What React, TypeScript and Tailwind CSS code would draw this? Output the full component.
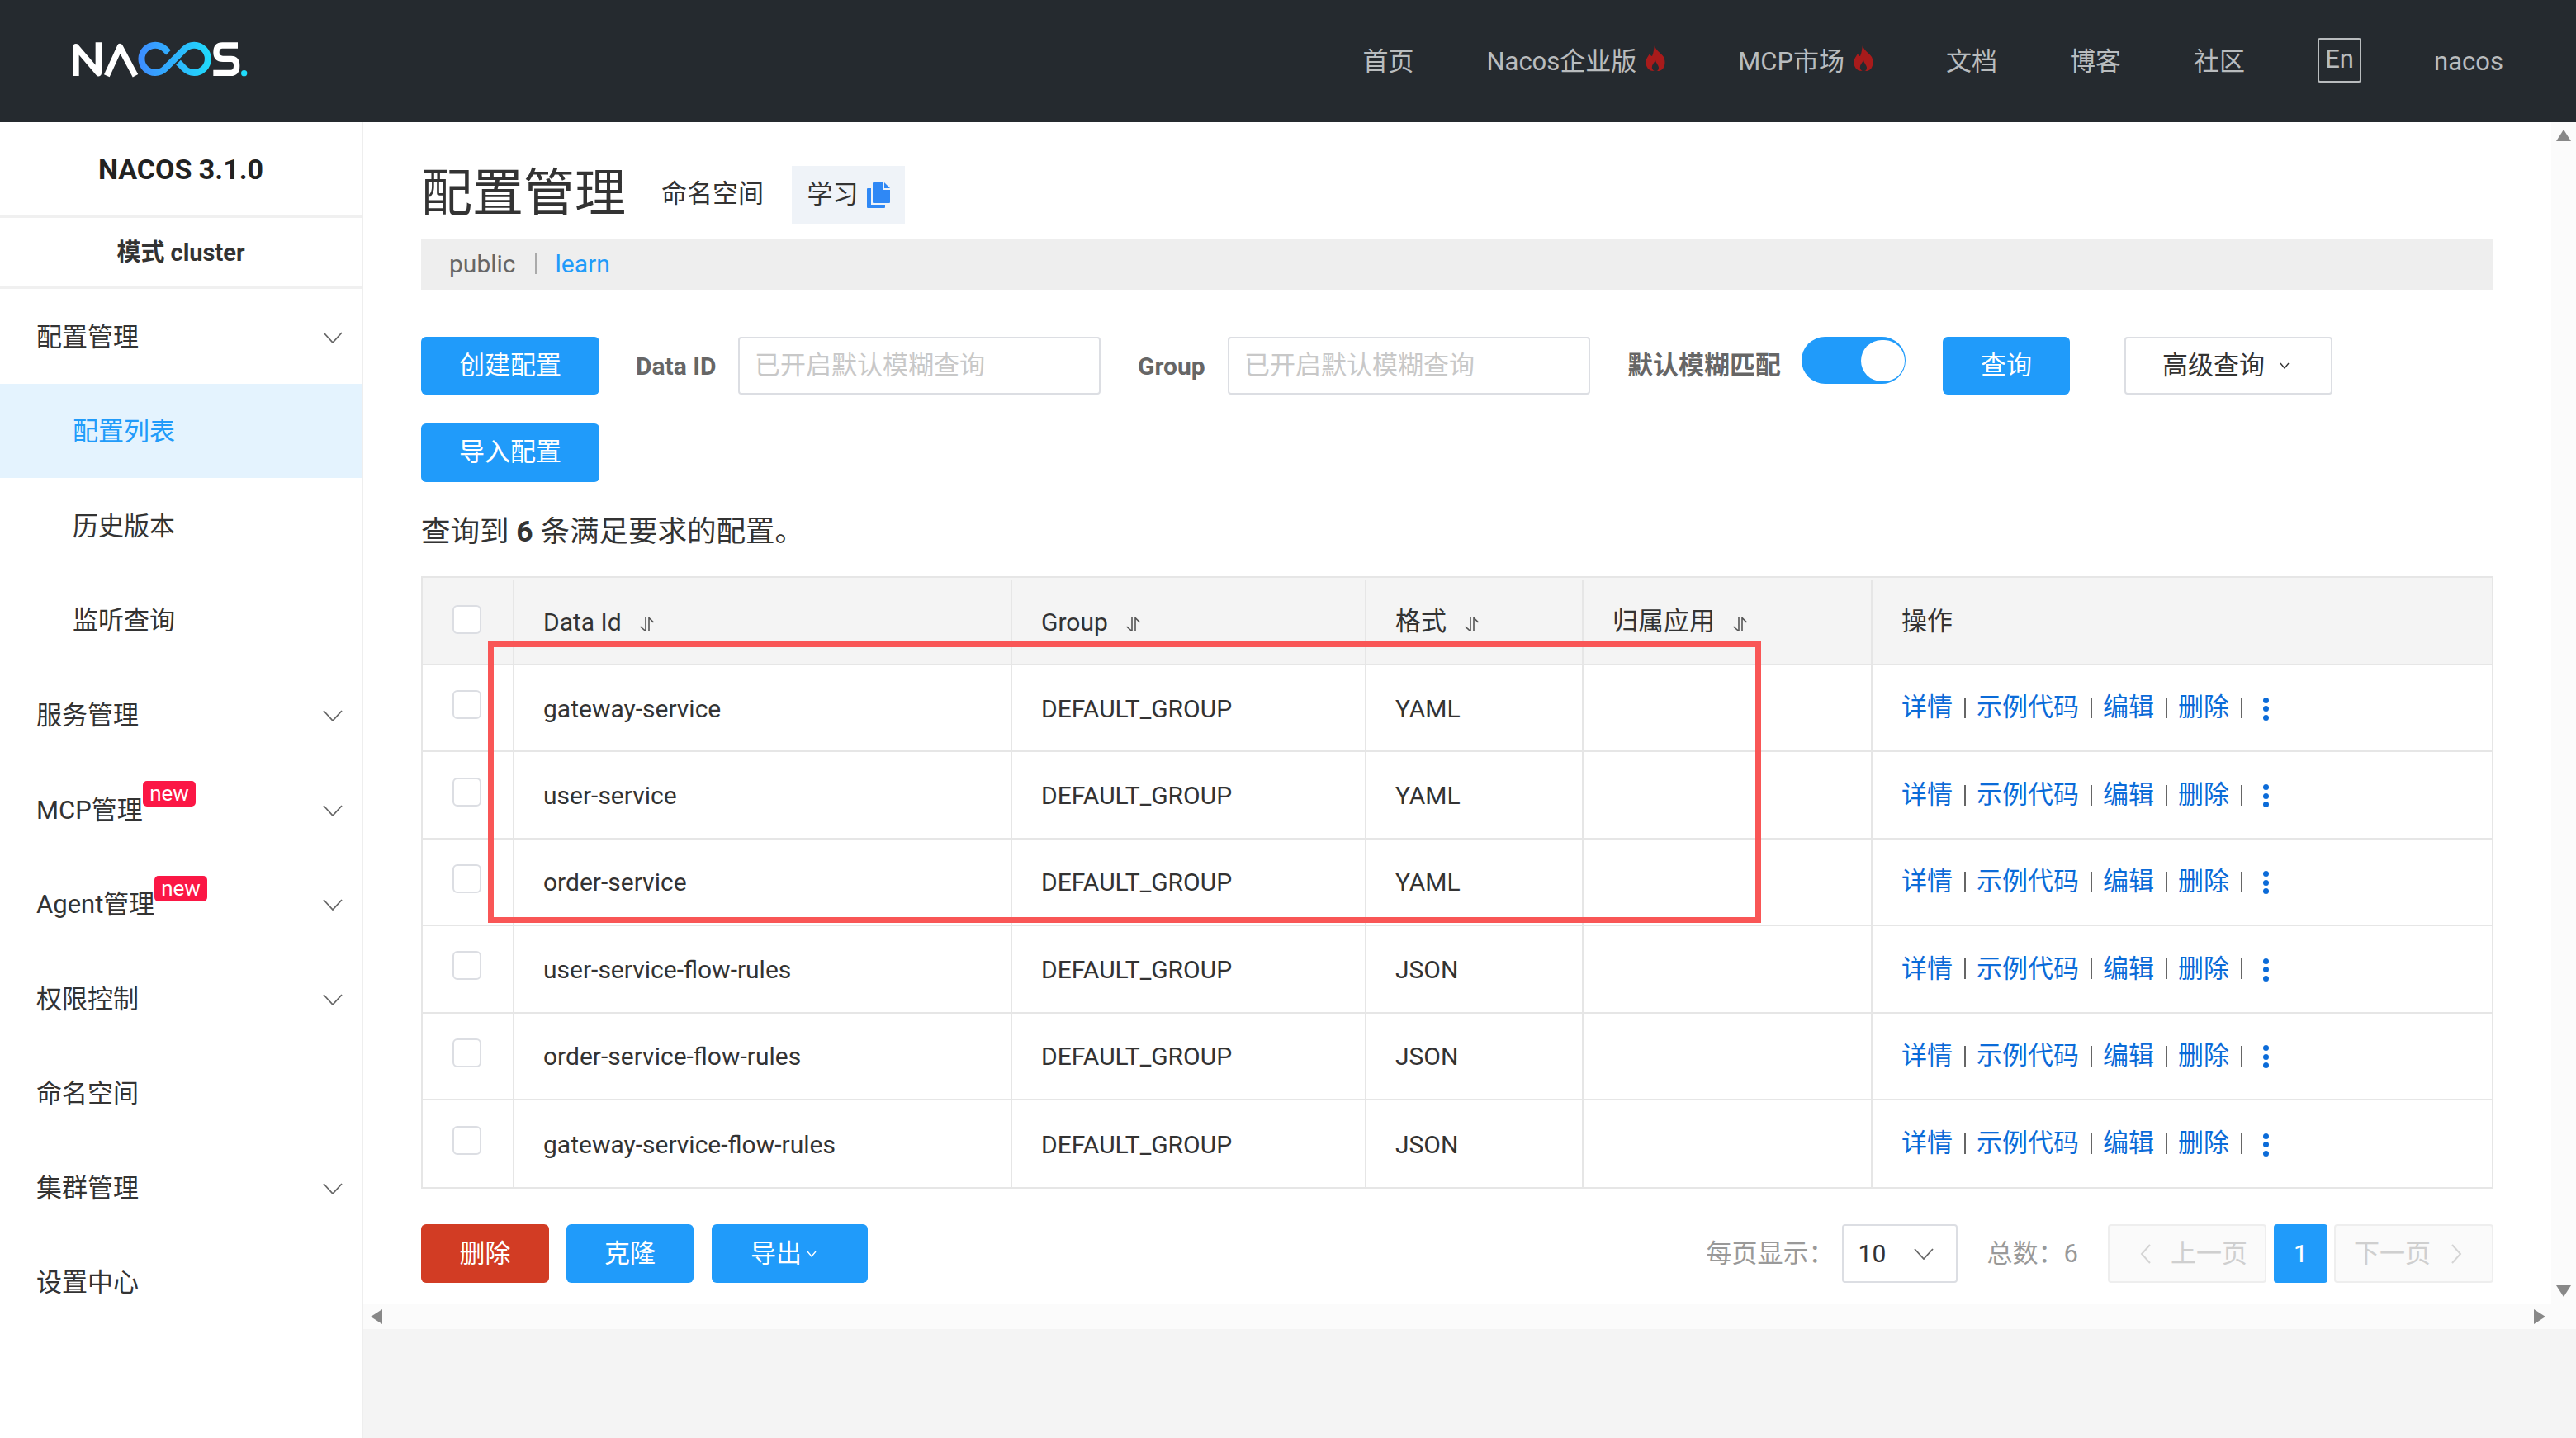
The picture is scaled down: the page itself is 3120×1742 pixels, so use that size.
const font = 'font-["Roboto","Noto_Sans_CJK_SC",sans-serif]'

const navLinks = [
  { label: '首页' },
  { label: 'Nacos企业版', hot: true },
  { label: 'MCP市场', hot: true },
  { label: '文档' },
  { label: '博客' },
  { label: '社区' },
]

const menu = [
  { label: '配置管理', arrow: true },
  { label: '配置列表', sub: true, active: true },
  { label: '历史版本', sub: true },
  { label: '监听查询', sub: true },
  { label: '服务管理', arrow: true },
  { label: 'MCP管理', arrow: true, badge: 'left-[173px]' },
  { label: 'Agent管理', arrow: true, badge: 'left-[187px]' },
  { label: '权限控制', arrow: true },
  { label: '命名空间' },
  { label: '集群管理', arrow: true },
  { label: '设置中心' },
]

const rows = [
  { id: 'gateway-service', format: 'YAML' },
  { id: 'user-service', format: 'YAML' },
  { id: 'order-service', format: 'YAML' },
  { id: 'user-service-flow-rules', format: 'JSON' },
  { id: 'order-service-flow-rules', format: 'JSON' },
  { id: 'gateway-service-flow-rules', format: 'JSON' },
]

function Logo() {
  return (
    <svg width="260" height="100" viewBox="0 0 780 300" fill="none">
      <defs>
        <linearGradient id="logo-loop" x1="320" y1="0" x2="590" y2="0" gradientUnits="userSpaceOnUse">
          <stop offset="0" stopColor="#3e8bff" />
          <stop offset="1" stopColor="#1fdcfb" />
        </linearGradient>
      </defs>
      <path d="M96 210V104L178 200V88" stroke="#fff" strokeWidth="22" strokeLinejoin="round" />
      <path d="M208 209L256 104L312 209" stroke="#fff" strokeWidth="22" strokeLinejoin="round" />
      <path
        d="M432 125L420 113A50 50 0 1 0 420 183L490 113A50 50 0 1 1 490 183L468 161"
        stroke="url(#logo-loop)"
        strokeWidth="24"
      />
      <path
        d="M684 99H628Q606 99 606 124Q606 148 630 148H660Q680 148 680 173Q680 199 658 199H595"
        stroke="#fff"
        strokeWidth="22"
      />
      <circle cx="707" cy="200" r="11" fill="#1fdcfb" />
    </svg>
  )
}

function Flame() {
  return (
    <svg width="24" height="31" viewBox="0 0 24 31" className="-mt-[9px] shrink-0">
      <path
        fillRule="evenodd"
        fill="#a81b1b"
        d="M11 0C12 6 19 9 22 14C25 20 24 31 14 31H10C2 31 -1 22 1 17C2 14 4 12 5 10C6 12 7 13 8 13C10 9 10 4 11 0ZM12 18C10 22 7 24 8 28C9 30 10 31 11 31H13C15 31 16 29 16 27C16 24 13 22 12 18Z"
      />
    </svg>
  )
}

function Chevron({ className = '' }: { className?: string }) {
  return (
    <svg width="24" height="14" viewBox="0 0 24 14" fill="none" stroke="#666" strokeWidth="1.8" className={`shrink-0 ${className}`}>
      <path d="M1 1L12 13L23 1" />
    </svg>
  )
}

function TinyChevron({ size = 12 }: { size?: number }) {
  return (
    <svg width={size} height="8" viewBox="0 0 12 8" fill="none" stroke="currentColor" strokeWidth="1.4" className="shrink-0">
      <path d="M1 1L6 7L11 1" />
    </svg>
  )
}

function PageArrow({ d }: { d: string }) {
  return (
    <svg width="13" height="24" viewBox="0 0 13 24" fill="none" stroke="#d4d4d4" strokeWidth="2" className="shrink-0">
      <path d={d} />
    </svg>
  )
}

function SortIcon() {
  return (
    <svg width="17" height="18" viewBox="0 0 17 18" fill="none" stroke="#555" strokeWidth="1.6" className="ml-[22px] mt-[5px] shrink-0">
      <path d="M0.5 12L7 17.5V0" />
      <path d="M11 18V1.5L16.5 7" />
    </svg>
  )
}

function Checkbox({ className = '' }: { className?: string }) {
  return <span className={`block size-[35px] rounded-md border-2 border-[#dcdee3] bg-white ${className}`} />
}

function Btn({ children, className = '' }: { children: React.ReactNode; className?: string }) {
  return (
    <button className={`flex h-[70px] items-center justify-center rounded-md bg-[#209bfa] text-[31px] text-white ${className}`}>
      {children}
    </button>
  )
}

function Cell({ className, children }: { className: string; children?: React.ReactNode }) {
  return (
    <div className={`flex h-full shrink-0 items-center border-r-2 border-[#e6e6e6] px-[35px] ${className}`}>
      {children}
    </div>
  )
}

function Actions() {
  const sep = <span className="mx-[13.5px] inline-block h-[25px] w-[2px] bg-[#666]" />
  return (
    <div className="flex items-center text-[31px] text-[#0b6bd8]">
      <span>详情</span>
      {sep}
      <span>示例代码</span>
      {sep}
      <span>编辑</span>
      {sep}
      <span>删除</span>
      {sep}
      <span className="ml-[12px] flex flex-col gap-[3.5px] pt-[2px]">
        <i className="block size-[7px] rounded-full bg-[#0b6bd8]" />
        <i className="block size-[7px] rounded-full bg-[#0b6bd8]" />
        <i className="block size-[7px] rounded-full bg-[#0b6bd8]" />
      </span>
    </div>
  )
}

export default function App() {
  return (
    <div className={`flex h-[1742px] w-[3120px] flex-col overflow-hidden bg-white ${font} text-[#333]`}>
      {/* top bar */}
      <header className="flex h-[148px] shrink-0 items-center justify-between bg-[#252a2f] pl-[60px] pr-[88px]">
        <div className="mt-[-4px]">
          <Logo />
        </div>
        <nav className="flex items-center gap-[88px] pt-[2px] text-[31px] text-[#b9bcbe]">
          {navLinks.map((l) => (
            <span key={l.label} className="flex items-center gap-[11px]">
              {l.label}
              {l.hot && <Flame />}
            </span>
          ))}
          <span className="-mt-[5px] flex h-[54px] w-[53px] items-center justify-center rounded-[3px] border-2 border-[#b9bcbe] text-[31px]">
            En
          </span>
          <span>nacos</span>
        </nav>
      </header>

      <div className="flex min-h-0 flex-1">
        {/* sidebar */}
        <aside className="w-[440px] shrink-0 border-r-2 border-[#eeeeee] bg-white">
          <div className="flex h-[116px] items-center justify-center border-b-[3px] border-[#f0f0f0] pt-[2px] text-[34px] font-bold text-[#222]">
            NACOS 3.1.0
          </div>
          <div className="flex h-[86px] items-center justify-center border-b-[3px] border-[#f0f0f0] pt-[3px] text-[29px] font-bold text-[#333]">
            模式&nbsp;cluster
          </div>
          <ul className="text-[31px]">
            {menu.map((m) => (
              <li
                key={m.label}
                className={`relative flex h-[114.6px] items-center justify-between pr-[23px] pt-[3px] ${
                  m.sub ? 'pl-[88px]' : 'pl-[44px]'
                } ${m.active ? 'bg-[#e4f3fe] text-[#209bfa]' : ''}`}
              >
                {m.label}
                {m.arrow && <Chevron />}
                {m.badge && (
                  <span
                    className={`absolute top-[23px] flex h-[31px] w-[64px] items-center justify-center rounded-[5px] bg-[#fb1745] text-[26px] text-white ${m.badge}`}
                  >
                    new
                  </span>
                )}
              </li>
            ))}
          </ul>
        </aside>

        {/* main area */}
        <main className="flex min-w-0 flex-1 flex-col bg-[#f4f4f4]">
          <div className="flex h-[1432px] shrink-0 bg-white">
            <div className="relative w-[2650px] shrink-0 pl-[70px] pr-[70px]">
              <div className="flex h-[141px] items-center pt-[32px]">
                <h1 className="text-[62px] font-normal text-[#333]">配置管理</h1>
                <span className="ml-[43px] mt-[2px] text-[31px]">命名空间</span>
                <span className="ml-[34px] mt-[3px] flex h-[70px] w-[137px] items-center justify-center gap-[10px] bg-[#eff3f8] text-[31px]">
                  学习
                  <svg width="28" height="31" viewBox="0 0 28 31" fill="#2f88f5" className="shrink-0">
                    <path d="M7 1Q7 0 8 0H19V9H28V24Q28 25 27 25H8Q7 25 7 24Z" />
                    <path d="M21 0L28 7H21Z" />
                    <path d="M0 8Q0 7 1 7H5V27H22V30Q22 31 21 31H1Q0 31 0 30Z" />
                  </svg>
                </span>
              </div>
              <div className="flex h-[62px] items-center bg-[#eeeeee] pb-[2px] pl-[34px] text-[30px] text-[#666]">
                public
                <span className="mx-[23px] h-[26px] w-[2px] bg-[#aaa]" />
                <span className="text-[#209bfa]">learn</span>
              </div>

              {/* filter bar */}
              <div className="mt-[57px] flex h-[70px] items-center">
                <Btn className="w-[216px]">创建配置</Btn>
                <span className="ml-[44px] w-[124px] text-[30px] font-bold text-[#666]">Data ID</span>
                <div className="flex h-[70px] w-[439px] items-center rounded-[4px] border-2 border-[#dcdee3] pl-[18px] text-[31px] text-[#c8c8c8]">
                  已开启默认模糊查询
                </div>
                <span className="ml-[45px] w-[109px] text-[30px] font-bold text-[#666]">Group</span>
                <div className="flex h-[70px] w-[439px] items-center rounded-[4px] border-2 border-[#dcdee3] pl-[18px] text-[31px] text-[#c8c8c8]">
                  已开启默认模糊查询
                </div>
                <span className="ml-[45px] w-[211px] text-[31px] font-bold text-[#666]">默认模糊匹配</span>
                <span className="-mt-[13px] flex h-[57px] w-[126px] items-center justify-end rounded-full bg-[#209bfa] pr-[1px]">
                  <i className="block h-[50px] w-[53px] rounded-full bg-white" />
                </span>
                <Btn className="ml-[45px] w-[154px]">查询</Btn>
                <button className="ml-[66px] flex h-[70px] w-[252px] items-center justify-start gap-[18px] rounded-[4px] border-2 border-[#dcdee3] pl-[44px] text-[31px]">
                  高级查询
                  <TinyChevron />
                </button>
              </div>
              <Btn className="mt-[35px] h-[71px] w-[216px]">导入配置</Btn>

              <p className="mt-[42px] text-[35.5px] leading-[36px] text-[#333]">
                查询到 <b>6</b> 条满足要求的配置。
              </p>

              {/* table */}
              <div className="mt-[36px] w-[2510px] border-2 border-r-2 border-[#e6e6e6] text-[30px]">
                <div className="flex h-[106px] items-center border-b-2 border-[#e6e6e6] bg-[#f4f4f4] pt-[3px]">
                  <Cell className="w-[111px] !px-0 justify-center pr-[2px]">
                    <Checkbox className="-mt-[6px] -ml-[2px]" />
                  </Cell>
                  <Cell className="w-[603px]">
                    Data Id
                    <SortIcon />
                  </Cell>
                  <Cell className="w-[429px]">
                    Group
                    <SortIcon />
                  </Cell>
                  <Cell className="w-[263px] text-[31px]">
                    格式
                    <SortIcon />
                  </Cell>
                  <Cell className="w-[350px] text-[31px]">
                    归属应用
                    <SortIcon />
                  </Cell>
                  <div className="flex h-full flex-1 items-center px-[35px] text-[31px]">操作</div>
                </div>
                {rows.map((r, i) => (
                  <div
                    key={r.id}
                    className={`flex h-[105.4px] items-center ${i < rows.length - 1 ? 'border-b-2 border-[#e6e6e6]' : ''}`}
                  >
                    <Cell className="w-[111px] !px-0 justify-center">
                      <Checkbox className="-mt-[8px] -ml-[2px]" />
                    </Cell>
                    <Cell className="w-[603px] pt-[1px]">{r.id}</Cell>
                    <Cell className="w-[429px] pt-[1px]">DEFAULT_GROUP</Cell>
                    <Cell className="w-[263px] pt-[1px]">{r.format}</Cell>
                    <Cell className="w-[350px]" />
                    <div className="flex h-full flex-1 items-center px-[35px]">
                      <Actions />
                    </div>
                  </div>
                ))}
              </div>

              {/* annotation drawn over the table */}
              <div className="pointer-events-none absolute left-[151px] top-[629px] h-[341px] w-[1542px] border-[7px] border-[#f95656]" />

              {/* footer */}
              <div className="mt-[43px] flex h-[71px] items-center">
                <Btn className="h-[71px] w-[155px] !bg-[#d23c24]">删除</Btn>
                <Btn className="ml-[21px] h-[71px] w-[154px]">克隆</Btn>
                <Btn className="ml-[22px] h-[71px] w-[189px] !justify-start gap-[4px] pl-[47px]">
                  导出
                  <TinyChevron size={16} />
                </Btn>
                <span className="ml-auto text-[31px] text-[#999]">每页显示：</span>
                <div className="ml-[9px] flex h-[71px] w-[140px] items-center justify-between rounded-[4px] border-2 border-[#dcdee3] pl-[18px] pr-[27px] text-[30px] text-[#333]">
                  10
                  <Chevron />
                </div>
                <span className="ml-[36px] text-[31px] text-[#999]">总数：6</span>
                <div className="ml-[36px] flex h-[71px] w-[192px] items-center gap-[24px] rounded-[4px] border-2 border-[#eeeeee] bg-[#fafafa] pl-[37px] text-[31px] text-[#cfcfcf]">
                  <PageArrow d="M12 1L2 12L12 23" />
                  上一页
                </div>
                <div className="ml-[9px] flex h-[71px] w-[65px] items-center justify-center rounded-[4px] bg-[#209bfa] text-[30px] text-white">
                  1
                </div>
                <div className="ml-[8px] flex h-[71px] w-[193px] items-center gap-[25px] rounded-[4px] border-2 border-[#eeeeee] bg-[#fafafa] pl-[22px] text-[31px] text-[#cfcfcf]">
                  下一页
                  <PageArrow d="M1 1L11 12L1 23" />
                </div>
              </div>
            </div>

            {/* vertical scrollbar */}
            <div className="flex w-[30px] shrink-0 flex-col items-center justify-between bg-[#fbfbfb] pb-[9px] pt-[9px]">
              <span className="h-0 w-0 border-x-[9px] border-b-[14px] border-x-transparent border-b-[#888]" />
              <span className="h-0 w-0 border-x-[9px] border-t-[14px] border-x-transparent border-t-[#888]" />
            </div>
          </div>
          {/* horizontal scrollbar */}
          <div className="flex h-[30px] shrink-0 items-center justify-between bg-[#fbfbfb] pl-[9px] pr-[37px]">
            <span className="h-0 w-0 border-y-[9px] border-r-[14px] border-y-transparent border-r-[#888]" />
            <span className="h-0 w-0 border-y-[9px] border-l-[14px] border-y-transparent border-l-[#888]" />
          </div>
        </main>
      </div>
    </div>
  )
}
